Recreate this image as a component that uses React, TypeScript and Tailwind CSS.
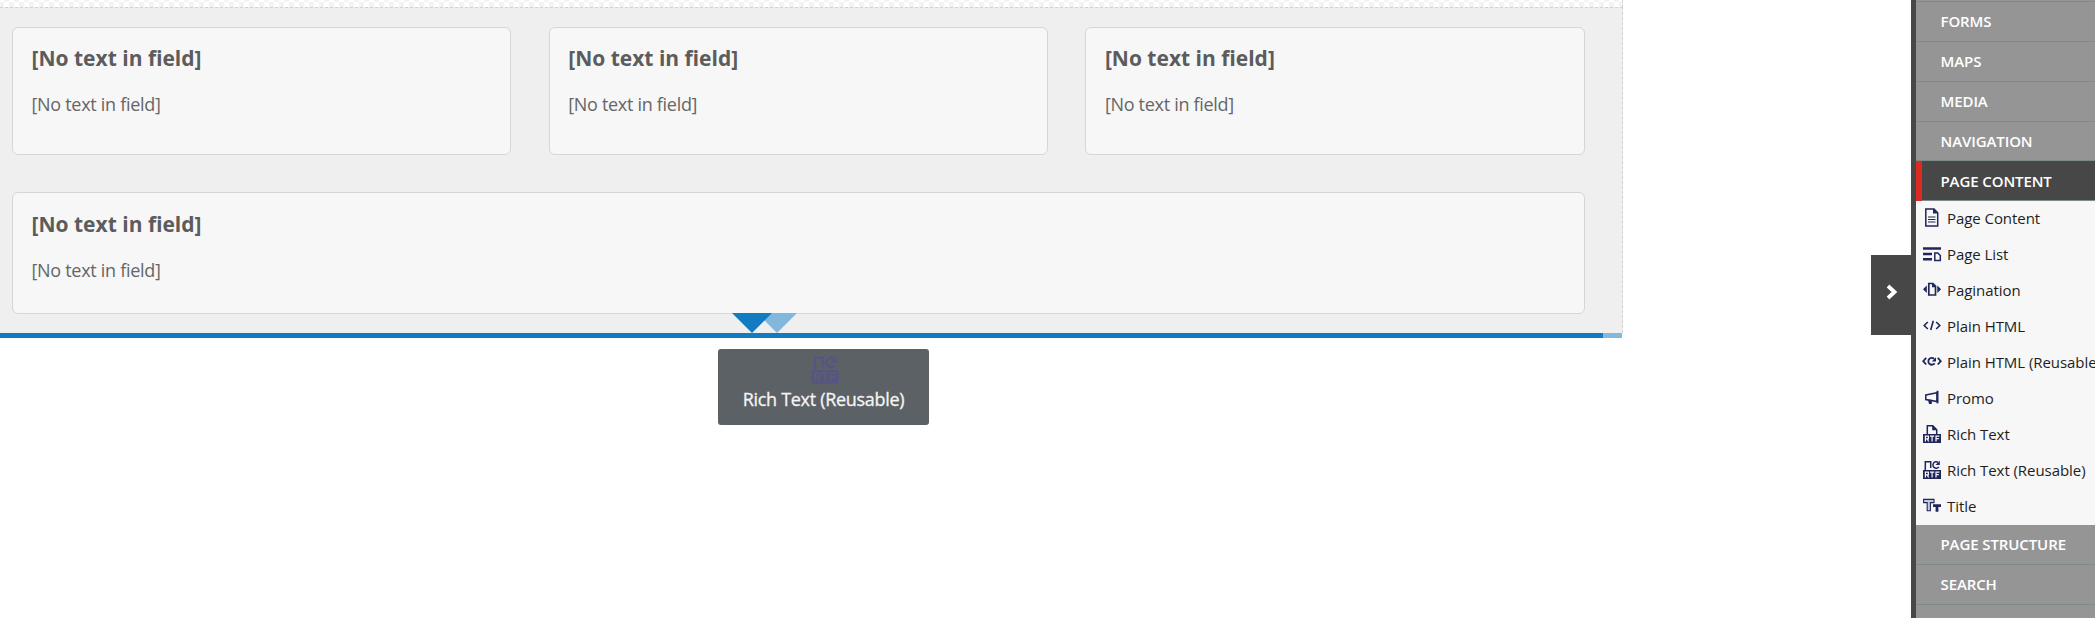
import React from "react";

const NAVY = "#20265c";

function Card({ className, headClass = "pt-[16px]" }: { className: string; headClass?: string }) {
  return (
    <div className={`rounded-[6px] border border-[#d6d6d6] bg-[#f7f7f7] pl-[18.5px] text-[#5c5c5c] ${className}`}>
      <h3 className={`text-[21px] leading-[29px] font-bold ${headClass}`}>[No text in field]</h3>
      <p className="pt-[17px] text-[18px] leading-[28px] tracking-[-0.3px] text-[#666666]">[No text in field]</p>
    </div>
  );
}

function Icon({ children }: { children: React.ReactNode }) {
  return (
    <svg className="mb-[2px] h-[20px] w-[20px] shrink-0" viewBox="0 0 20 20" fill="none" stroke={NAVY} strokeWidth="1.5">
      {children}
    </svg>
  );
}

function Rtf({ letterClass }: { letterClass: string }) {
  return (
    <>
      <path fill="currentColor" stroke="none" d="M1 10h18v9H1z" />
      <path
        className={letterClass}
        strokeWidth="1.2"
        d="M3.4 17.5v-5.4h3v2.7h-3M5 14.8l1.7 2.7M8 12.1h4.2M10.1 12.1v5.4M14 17.5v-5.4h3.4M14 14.7h2.8"
      />
    </>
  );
}

function RtfReusable({ letterClass }: { letterClass: string }) {
  return (
    <>
      <path d="M3.3 10V1.8h5.4V8" />
      <path strokeWidth="1.5" d="M16.8 6.8a3.2 3.2 0 1 1-.8-4.4" />
      <path fill="currentColor" stroke="none" d="M17.8.8v4.3h-4.3z" />
      <Rtf letterClass={letterClass} />
    </>
  );
}

const components: { label: string; icon: React.ReactNode }[] = [
  {
    label: "Page Content",
    icon: (
      <>
        <path d="M3.8 1h8.2l3.7 3.7v13.2H3.8z" />
        <path fill={NAVY} stroke="none" d="M11 .5v5h5z" />
        <path strokeWidth="1.2" d="M6 9h7.5M6 11.5h7.5M6 14h7.5" />
      </>
    ),
  },
  {
    label: "Page List",
    icon: (
      <>
        <path strokeWidth="2.6" d="M1 4.5h18M1 10h9M1 15.3h9" />
        <path d="M12.8 9h3l2.5 2.5v5h-5.5z" />
      </>
    ),
  },
  {
    label: "Pagination",
    icon: (
      <>
        <path strokeWidth="1.7" d="M6.8 3.5H11L13.5 6v9H6.8z" />
        <path fill={NAVY} stroke="none" d="M10 3.3v4h4zM4.8 5.5v7.6L1 9.3zM15.3 5.5v7.6l3.8-3.8z" />
      </>
    ),
  },
  {
    label: "Plain HTML",
    icon: <path strokeWidth="1.6" d="M5.8 6 2.2 9.5 5.8 13M14.2 6l3.6 3.5-3.6 3.5M11.3 4.8 8.7 14" />,
  },
  {
    label: "Plain HTML (Reusable)",
    icon: (
      <>
        <path strokeWidth="1.8" d="M4.2 5.9 1.2 9.2l3 3.3M15.8 5.9l3 3.3-3 3.3M12.6 11.2a3.4 3.4 0 1 1-.5-4.3" />
        <path fill={NAVY} stroke="none" d="M14 5.2v4.3H9.8z" />
      </>
    ),
  },
  {
    label: "Promo",
    icon: (
      <>
        <path d="M3.8 6.9 15 4.7v8.8L3.8 11.5z" />
        <path strokeWidth="2" d="M15.5 2.8v12.5" />
        <path fill={NAVY} stroke="none" d="M6 11.8h3.8v4.3H7z" />
      </>
    ),
  },
  {
    label: "Rich Text",
    icon: (
      <>
        <path d="M5.3 10V1.8h5.5l3.9 3.9V10" />
        <path fill={NAVY} stroke="none" d="M10.2 1.2v5h5z" />
        <Rtf letterClass="stroke-[#f7f7f7]" />
      </>
    ),
  },
  { label: "Rich Text (Reusable)", icon: <RtfReusable letterClass="stroke-[#f7f7f7]" /> },
  {
    label: "Title",
    icon: (
      <>
        <path fill="#c9cada" strokeWidth="1.1" d="M1.6 3.4H12v3.2H8.4v8.2H5.2V6.6H1.6z" />
        <path fill={NAVY} stroke="none" d="M11 8.2h8V11h-2.6v4.7h-2.8V11H11z" />
      </>
    ),
  },
];

function Category({ label, className = "" }: { label: string; className?: string }) {
  return (
    <div
      className={`border-b border-[#7f8a8b] bg-[#959595] pl-[24.5px] text-[15px] leading-[39px] font-semibold tracking-[-0.1px] text-white ${className}`}
    >
      {label}
    </div>
  );
}

function Sidebar() {
  return (
    <aside className="w-[184px] overflow-hidden border-l-[5px] border-[#474747] bg-[#959595] whitespace-nowrap">
      <div className="h-[2px] border-b border-[#7f8a8b]" />
      <Category label="FORMS" />
      <Category label="MAPS" />
      <Category label="MEDIA" />
      <Category label="NAVIGATION" className="h-[39px]" />
      <div className="h-[40px] border-b border-[#7f8a8b] bg-[#474747]">
        <div className="border-l-[6px] border-[#dc2a20] pl-[18.5px] text-[15px] leading-[40px] font-semibold tracking-[-0.1px] text-white">
          PAGE CONTENT
        </div>
      </div>
      <ul className="h-[324px] bg-[#f7f7f7]" style={{ color: NAVY }}>
        {components.map((c) => (
          <li key={c.label} className="flex h-[36px] items-center gap-[5px] pl-[6px]">
            <Icon>{c.icon}</Icon>
            <span className="mb-[1.5px] text-[15px] tracking-[-0.06px] text-[#1e1e1e]">{c.label}</span>
          </li>
        ))}
      </ul>
      <Category label="PAGE STRUCTURE" />
      <Category label="SEARCH" />
    </aside>
  );
}

export default function App() {
  return (
    <div className="relative flex h-[618px] w-[2095px] overflow-hidden bg-white font-['Open_Sans','Noto_Sans',sans-serif]">
      <main className="flex w-[1623px] flex-col">
        <div className="h-[7px] border-r border-dashed border-[#d2d2d2] bg-[repeating-conic-gradient(#f3f3f3_0_25%,#ffffff_0_50%)] bg-[length:10px_10px] bg-[position:-1px_-3px]" />
        <section className="flex h-[326px] flex-col gap-[37px] border-t border-r border-dashed border-[#d2d2d2] bg-[#efefef] pt-[19px] pl-[12px]">
          <div className="flex gap-[37.4px]">
            <Card className="h-[128px] w-[499.3px]" />
            <Card className="h-[128px] w-[499.3px]" />
            <Card className="h-[128px] w-[499.3px]" />
          </div>
          <Card className="h-[122px] w-[1573px] shrink-0" headClass="pt-[17px]" />
        </section>
        <div className="flex h-[5px] w-[1622px]">
          <div className="w-[1603px] bg-[#117cc1]" />
          <div className="flex-1 bg-[#83b8dc]" />
        </div>
      </main>
      <div className="flex flex-1 items-start justify-end pt-[255px]">
        <button className="flex h-[80px] w-[40px] items-center justify-center bg-[#474747] pb-[6px] pl-[2px]">
          <svg width="12" height="18" viewBox="0 0 12 18" fill="none" stroke="white" strokeWidth="3.8">
            <path d="M2 3 8.5 9 2 15" />
          </svg>
        </button>
      </div>
      <Sidebar />

      <svg className="absolute top-[313px] left-[732px]" width="66" height="20" viewBox="0 0 66 20">
        <path fill="#83b8dc" d="M25 0h40L45 20z" />
        <path fill="#117cc1" d="M0 0h40L20 20z" />
      </svg>
      <div className="absolute top-[349px] left-[718px] flex h-[76px] w-[211px] flex-col items-center rounded-[3px] bg-[#5c6165] pt-[6px] text-[#545583]">
        <svg className="ml-[2px] h-[30px] w-[30px]" viewBox="0 0 20 20" fill="none" stroke="currentColor" strokeWidth="1.5">
          <RtfReusable letterClass="stroke-[#5c6165]" />
        </svg>
        <span className="text-[18px] leading-[28px] tracking-[-0.3px] text-[#f6f6f6] [-webkit-text-stroke:0.3px_#f2f2f2]">
          Rich Text (Reusable)
        </span>
      </div>
    </div>
  );
}
